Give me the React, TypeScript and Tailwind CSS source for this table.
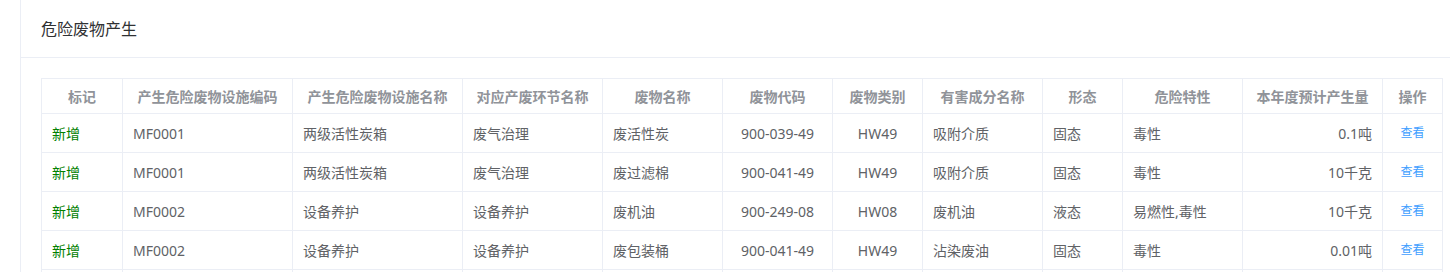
import React from "react";

const cols = [
  { title: "标记", w: "w-[81px]", align: "text-left" },
  { title: "产生危险废物设施编码", w: "w-[170px]", align: "text-left" },
  { title: "产生危险废物设施名称", w: "w-[170px]", align: "text-left" },
  { title: "对应产废环节名称", w: "w-[140px]", align: "text-left" },
  { title: "废物名称", w: "w-[120px]", align: "text-left" },
  { title: "废物代码", w: "w-[110px]", align: "text-center" },
  { title: "废物类别", w: "w-[90px]", align: "text-center" },
  { title: "有害成分名称", w: "w-[120px]", align: "text-left" },
  { title: "形态", w: "w-[80px]", align: "text-left" },
  { title: "危险特性", w: "w-[120px]", align: "text-left" },
  { title: "本年度预计产生量", w: "w-[140px]", align: "text-right" },
  { title: "操作", w: "w-[60px]", align: "text-center" },
];

const rows = [
  ["MF0001", "两级活性炭箱", "废气治理", "废活性炭", "900-039-49", "HW49", "吸附介质", "固态", "毒性", "0.1吨"],
  ["MF0001", "两级活性炭箱", "废气治理", "废过滤棉", "900-041-49", "HW49", "吸附介质", "固态", "毒性", "10千克"],
  ["MF0002", "设备养护", "设备养护", "废机油", "900-249-08", "HW08", "废机油", "液态", "易燃性,毒性", "10千克"],
  ["MF0002", "设备养护", "设备养护", "废包装桶", "900-041-49", "HW49", "沾染废油", "固态", "毒性", "0.01吨"],
];

export default function App() {
  return (
    <div
      className="w-[1450px] h-[272px] overflow-hidden bg-white"
      style={{ fontFamily: '"Noto Sans", "Noto Sans CJK SC", sans-serif' }}
    >
      <div className="ml-[20px] w-[1444px] border-l border-r border-[#ebeef5] bg-white">
        <div className="h-[58px] border-b border-[#ebeef5] px-[20px] flex items-center">
          <span className="text-[16px] text-[#303133] leading-none">危险废物产生</span>
        </div>
        <div className="px-[20px] pt-[20px] pb-[20px]">
          <div className="w-[1402px] border-l border-t border-[#ebeef5]">
            <div className="flex">
              {cols.map((c) => (
                <div
                  key={c.title}
                  className={`${c.w} shrink-0 h-[35px] border-r border-b border-[#ebeef5] flex items-center justify-center text-[14px] font-bold text-[#909399] whitespace-nowrap`}
                >
                  {c.title}
                </div>
              ))}
            </div>
            {rows.map((r, i) => (
              <div key={i} className="flex">
                <div className="w-[81px] shrink-0 h-[39px] border-r border-b border-[#ebeef5] px-[10px] flex items-center text-[14px] text-[#008000]">
                  新增
                </div>
                {r.map((v, j) => {
                  const c = cols[j + 1];
                  const justify =
                    c.align === "text-center"
                      ? "justify-center"
                      : c.align === "text-right"
                      ? "justify-end"
                      : "justify-start";
                  return (
                    <div
                      key={j}
                      className={`${c.w} shrink-0 h-[39px] border-r border-b border-[#ebeef5] px-[10px] flex items-center ${justify} text-[14px] text-[#606266] whitespace-nowrap`}
                    >
                      {v}
                    </div>
                  );
                })}
                <div className="w-[60px] shrink-0 h-[39px] border-r border-b border-[#ebeef5] flex items-center justify-center text-[12px] text-[#409eff]">
                  查看
                </div>
              </div>
            ))}
            <div className="flex">
              {cols.map((c) => (
                <div
                  key={c.title}
                  className={`${c.w} shrink-0 h-[39px] border-r border-b border-[#ebeef5]`}
                />
              ))}
            </div>
          </div>
        </div>
      </div>
    </div>
  );
}
